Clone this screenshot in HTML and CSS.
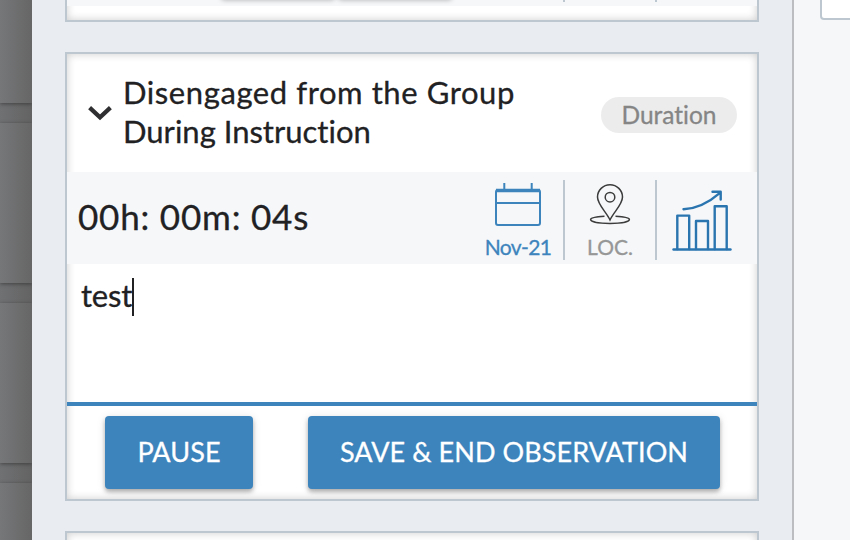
FILE: index.html
```html
<!DOCTYPE html>
<html lang="en">
<head>
  <meta charset="UTF-8">
  <meta name="viewport" content="width=device-width, initial-scale=1.0">
  <title>Observation</title>
  <link rel="stylesheet" href="styles.css">
</head>
<body>

<div class="page">
  <div class="backdrop">
    <div class="row"></div>
    <div class="row"></div>
    <div class="row"></div>
    <div class="row"></div>
  </div>

  <div class="panel">
    <div class="card card-prev">
      <div class="prev-strip">
        <div class="prev-button"></div>
        <div class="prev-button"></div>
        <div class="tick tick-first"></div>
        <div class="tick"></div>
      </div>
    </div>

    <div class="card">
      <div class="card-header">
        <svg class="chevron" width="26" height="16" viewBox="0 0 26 16">
          <path d="M2.6 2.6 L13 12.4 L23.4 2.6" fill="none" stroke="#2f2f31" stroke-width="4.2"/>
        </svg>
        <h2 class="title"><span class="title-first">Disengaged from the Group</span><br><span class="title-second">During Instruction</span></h2>
        <span class="badge">Duration</span>
      </div>

      <div class="toolbar">
        <div class="timer">00h: 00m: 04s</div>
        <div class="tool tool-date">
          <svg width="48" height="46" viewBox="0 0 48 46" fill="none" stroke="#3d84bd" stroke-width="2">
            <rect x="2" y="8" width="44" height="35" rx="2"/>
            <path d="M2 8.5 H46" stroke-width="3.6"/>
            <path d="M1.5 21 H46.5 M10.3 1 V8 M37.7 1 V8"/>
          </svg>
          <span class="label-date">Nov-21</span>
        </div>
        <div class="tool tool-loc">
          <svg width="42" height="46" viewBox="0 0 42 46" fill="none" stroke="#3c3c3c" stroke-width="1.5">
            <path d="M21 38 C17.5 30 8.5 22.7 8.5 15 A12.5 12.2 0 0 1 33.5 15 C33.5 22.7 24.5 30 21 38 Z"/>
            <circle cx="21" cy="15.2" r="4.8"/>
            <path d="M15.5 34.2 C7 34.6 1.6 35.9 1.6 37.6 C1.6 40 10 41.4 21 41.4 C32 41.4 40.4 40 40.4 37.6 C40.4 35.9 35 34.6 26.5 34.2"/>
          </svg>
          <span class="label-loc">LOC.</span>
        </div>
        <div class="tool tool-chart">
          <svg width="60" height="62" viewBox="0 0 60 62" fill="none" stroke="#2a74b0" stroke-width="2.4" stroke-linecap="round" stroke-linejoin="round">
            <path d="M1.5 59.5 H58.5"/>
            <path d="M5.3 59 V25.6 H17.2 V59 M24 59 V31 H36 V59 M42.7 59 V16.2 H54.7 V59"/>
            <path d="M11.5 19.2 C26 18.5 38 11.5 48 2.8 M40.5 1.8 H48.7 V9.6"/>
          </svg>
        </div>
      </div>

      <div class="notes"><span class="notes-text">test</span><span class="caret"></span></div>

      <div class="actions">
        <button class="btn btn-pause">PAUSE</button>
        <button class="btn btn-save">SAVE &amp; END OBSERVATION</button>
      </div>
    </div>

    <div class="card card-next"></div>
  </div>

  <div class="side">
    <div class="side-box"></div>
  </div>
</div>

</body>
</html>
```
FILE: styles.css
```css
* {
  box-sizing: border-box;
}

body {
  margin: 0;
  font-family: Lato, "Liberation Sans", sans-serif;
  font-variant-ligatures: none;
  color: #212123;
  background-color: #f5f7f9;
}

.page {
  display: flex;
  width: 850px;
  height: 540px;
  overflow: hidden;
}

.backdrop {
  width: 32px;
  flex-shrink: 0;
  background: linear-gradient(to right, #707173, #636363);
  overflow: hidden;
}

.backdrop .row {
  height: 160px;
  margin-bottom: 20px;
  background: linear-gradient(to right, #767779, #666666);
  box-shadow: 0 1px 4px rgba(0, 0, 0, 0.4);
}

.backdrop .row:first-child {
  height: 103px;
}

.panel {
  width: 762px;
  flex-shrink: 0;
  padding: 0 33px;
  background-color: #e9edf2;
  border-right: 2px solid #bbbdc0;
}

.card {
  height: 449px;
  margin-bottom: 30px;
  border: 2px solid #bdc7d0;
  background-color: #fff;
  box-shadow: inset 0 0 9px rgba(0, 0, 0, 0.2);
}

.card-prev {
  height: 82px;
  margin-top: -60px;
}

.prev-strip {
  display: flex;
  height: 64px;
  background-color: #f5f7f9;
  padding-left: 154px;
}

.prev-button {
  width: 114px;
  height: 57px;
  margin-right: 3px;
  border-radius: 4px;
  box-shadow: 0 1px 5px rgba(0, 0, 0, 0.3);
}

.tick {
  width: 2px;
  height: 60px;
  margin-left: 90px;
  background-color: #bdc7d0;
}

.tick-first {
  margin-left: 108px;
}

.card-header {
  display: flex;
  align-items: center;
  height: 118px;
  padding: 0 20px;
}

.chevron {
  margin-right: 10px;
}

.title {
  margin: -2px 0 0;
  flex: 1;
  font-size: 31px;
  line-height: 39px;
  font-weight: 400;
  white-space: nowrap;
  -webkit-text-stroke: 0.3px #212123;
}

.title-first {
  letter-spacing: 0.58px;
}

.title-second {
  letter-spacing: 0;
}

.badge {
  width: 136px;
  height: 36px;
  margin-top: 4px;
  border-radius: 18px;
  background-color: #ececec;
  color: #858585;
  font-size: 24.5px;
  line-height: 35px;
  text-align: center;
  -webkit-text-stroke: 0.3px #858585;
}

.toolbar {
  display: flex;
  align-items: center;
  height: 92px;
  background-color: #f5f7f9;
}

.timer {
  flex: 1;
  padding: 0 0 4px 11px;
  font-size: 35px;
  letter-spacing: 0.8px;
  white-space: nowrap;
  -webkit-text-stroke: 0.3px #212123;
}

.tool {
  display: flex;
  flex-direction: column;
  align-items: center;
  height: 80px;
  margin-top: 4px;
  padding-top: 2px;
  font-size: 21px;
  line-height: 26px;
}

.tool svg {
  flex-shrink: 0;
}

.tool-date {
  width: 93px;
  border-right: 2px solid #bdc7d0;
  color: #3d84bd;
}

.tool-loc {
  width: 92px;
  border-right: 2px solid #bdc7d0;
  color: #979797;
}

.tool-chart {
  width: 100px;
  padding: 9.5px 10px 0 0;
}

.label-date,
.label-loc {
  margin-top: 6px;
  -webkit-text-stroke: 0.3px currentColor;
}

.label-date {
  padding-left: 1px;
  letter-spacing: -0.6px;
}

.notes {
  display: flex;
  height: 142px;
  padding: 13px 14px;
  border-bottom: 4px solid #3d84bd;
  font-size: 31px;
  line-height: 36px;
  letter-spacing: -0.2px;
  -webkit-text-stroke: 0.3px #212123;
}

.caret {
  width: 2px;
  height: 38px;
  margin-top: 1px;
  background-color: #212123;
}

.actions {
  display: flex;
  justify-content: space-between;
  padding: 10px 37px 0 38px;
}

.btn {
  height: 73px;
  padding: 0 0 2px;
  border: none;
  border-radius: 4px;
  background-color: #3d84bd;
  color: #fff;
  font-family: inherit;
  font-size: 27px;
  letter-spacing: 0.08px;
  white-space: nowrap;
  -webkit-text-stroke: 0.3px #fff;
  box-shadow: 0 3px 4px rgba(0, 0, 0, 0.28), 0 1px 10px rgba(0, 0, 0, 0.1);
}

.btn-pause {
  width: 148px;
}

.btn-save {
  width: 412px;
}

.side {
  flex: 1;
  padding-left: 26px;
}

.side-box {
  width: 60px;
  height: 40px;
  margin-top: -20px;
  border: 2px solid #bdc7d0;
  border-radius: 4px;
  background-color: #fff;
}
```
